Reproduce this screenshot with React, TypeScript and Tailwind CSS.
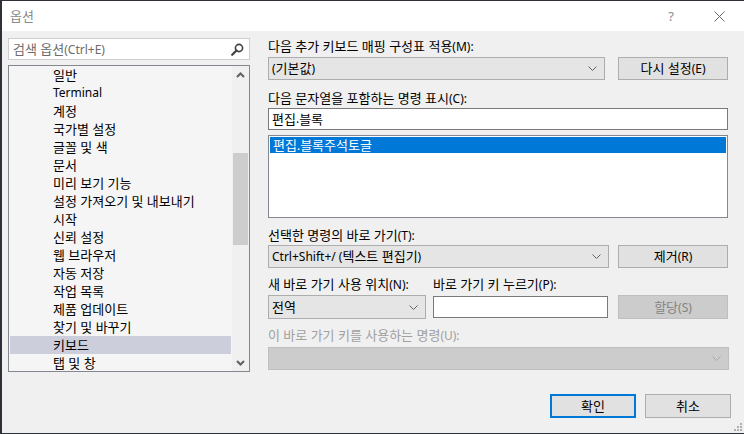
import React from 'react'

const items = [
  '일반',
  'Terminal',
  '계정',
  '국가별 설정',
  '글꼴 및 색',
  '문서',
  '미리 보기 기능',
  '설정 가져오기 및 내보내기',
  '시작',
  '신뢰 설정',
  '웹 브라우저',
  '자동 저장',
  '작업 목록',
  '제품 업데이트',
  '찾기 및 바꾸기',
  '키보드',
  '탭 및 창',
]

// Hangul runs are set a touch larger so their width matches the original UI font
const T = ({ s }: { s: string }) => {
  const parts = s.split(/([\uAC00-\uD7A3]+(?:\s+[\uAC00-\uD7A3]+)*)/).filter(Boolean)
  return (
    <>
      {parts.map((p, i) =>
        /[\uAC00-\uD7A3]/.test(p) ? (
          <span key={i} className="text-[13px]">{p}</span>
        ) : (
          <span key={i} className="text-[12px]">{p}</span>
        )
      )}
    </>
  )
}

const Chevron = ({ color = '#606060' }: { color?: string }) => (
  <svg width="9" height="5" viewBox="0 0 9 5">
    <polyline points="0.5,0.5 4.5,4.5 8.5,0.5" fill="none" stroke={color} strokeWidth="1" />
  </svg>
)

const Combo = ({ text, className }: { text: string; className: string }) => (
  <div className={`flex items-center justify-between border border-[#adadad] bg-[#e5e5e5] pl-[3px] pr-[7px] ${className}`}>
    <span><T s={text} /></span>
    <Chevron />
  </div>
)

const Button = ({ text, className }: { text: string; className: string }) => (
  <div className={`flex items-center justify-center border ${className}`}>
    <span><T s={text} /></span>
  </div>
)

const Label = ({ text, className = '' }: { text: string; className?: string }) => (
  <div className={`h-[16px] shrink-0 overflow-visible whitespace-nowrap ${className}`}>
    <T s={text} />
  </div>
)

const App: React.FC = () => {
  return (
    <div className="flex h-[434px] w-[744px] flex-col overflow-hidden border-t border-b border-l-2 border-[#2e3238] bg-[#f0f0f0] text-[12px] leading-[16px] text-black font-['Noto_Sans','Noto_Sans_CJK_KR',sans-serif]">
      {/* title bar */}
      <div className="flex h-[30px] shrink-0 items-center bg-white">
        <span className="ml-[8px] text-[#8a8a8a]"><T s="옵션" /></span>
        <span className="ml-auto mr-[40px] text-[13px] text-[#8a8a8a]">?</span>
        <svg width="11" height="11" viewBox="0 0 11 11" className="mr-[19px]">
          <path d="M0.5 0.5 L10.5 10.5 M10.5 0.5 L0.5 10.5" stroke="#6a6a6a" strokeWidth="1" />
        </svg>
      </div>

      <div className="flex flex-1 flex-col">
        <div className="flex h-[341px] shrink-0 pt-[7px]">
          {/* left column */}
          <div className="ml-[6px] flex w-[242px] flex-col">
            <div className="flex h-[22px] shrink-0 items-center justify-between border border-[#cdcdd2] bg-white pl-[4px] pr-[5px]">
              <span className="text-[#6d6d6d]"><T s="검색 옵션(Ctrl+E)" /></span>
              <svg width="13" height="13" viewBox="0 0 13 13">
                <circle cx="8" cy="5" r="3.6" fill="none" stroke="#404040" strokeWidth="1.6" />
                <path d="M5.5 7.5 L1.2 11.8" stroke="#404040" strokeWidth="2.2" strokeLinecap="round" />
              </svg>
            </div>
            <div className="mt-[5px] flex h-[307px] shrink-0 border border-[#828790] bg-[#f5f5f5]">
              <div className="flex flex-1 flex-col px-[1px]">
                {items.map((item) => (
                  <div
                    key={item}
                    className={`h-[18px] shrink-0 pl-[43px] leading-[18px] ${item === '키보드' ? 'bg-[#cccedb]' : ''}`}
                  >
                    <T s={item} />
                  </div>
                ))}
              </div>
              <div className="flex w-[17px] flex-col items-center bg-[#f0f0f0]">
                <div className="flex h-[17px] w-full items-center justify-center">
                  <svg width="9" height="6" viewBox="0 0 9 6">
                    <polyline points="1,5 4.5,1.5 8,5" fill="none" stroke="#606060" strokeWidth="2" />
                  </svg>
                </div>
                <div className="mt-[70px] h-[92px] w-[15px] bg-[#cdcdcd]" />
                <div className="mt-auto flex h-[17px] w-full items-center justify-center">
                  <svg width="9" height="6" viewBox="0 0 9 6">
                    <polyline points="1,1 4.5,4.5 8,1" fill="none" stroke="#606060" strokeWidth="2" />
                  </svg>
                </div>
              </div>
            </div>
          </div>

          {/* right column */}
          <div className="ml-[18px] flex w-[461px] flex-col">
            <Label text="다음 추가 키보드 매핑 구성표 적용(M):" />
            <div className="mt-[3px] flex">
              <Combo text="(기본값)" className="h-[23px] w-[337px]" />
              <Button text="다시 설정(E)" className="ml-[13px] h-[23px] w-[110px] border-[#adadad] bg-[#e1e1e1]" />
            </div>

            <Label text="다음 문자열을 포함하는 명령 표시(C):" className="mt-[10px]" />
            <div className="mt-[2px] flex h-[22px] w-[460px] shrink-0 items-center border border-[#7a7a7a] bg-white pl-[3px]">
              <T s="편집.블록" />
            </div>
            <div className="mt-[5px] h-[83px] w-[460px] shrink-0 border border-[#828790] bg-white p-[1px]">
              <div className="h-[16px] overflow-hidden bg-[#0078d7] pl-[3px] leading-[16px] text-white"><T s="편집.블록주석토글" /></div>
            </div>

            <Label text="선택한 명령의 바로 가기(T):" className="mt-[9px]" />
            <div className="mt-[2px] flex">
              <Combo text="Ctrl+Shift+/ (텍스트 편집기)" className="h-[23px] w-[341px]" />
              <Button text="제거(R)" className="ml-[9px] h-[23px] w-[110px] border-[#adadad] bg-[#e1e1e1]" />
            </div>

            <div className="mt-[8px] flex h-[16px]">
              <Label text="새 바로 가기 사용 위치(N):" className="w-[165px]" />
              <Label text="바로 가기 키 누르기(P):" />
            </div>
            <div className="mt-[3px] flex">
              <Combo text="전역" className="h-[24px] w-[158px]" />
              <div className="ml-[7px] mt-[1px] h-[22px] w-[175px] border border-[#7a7a7a] bg-white" />
              <Button text="할당(S)" className="ml-[10px] h-[24px] w-[110px] border-[#bfbfbf] bg-[#cccccc] text-[#838383]" />
            </div>

            <Label text="이 바로 가기 키를 사용하는 명령(U):" className="mt-[8px] text-[#a0a0a0]" />
            <div className="mt-[4px] flex h-[23px] w-[461px] shrink-0 items-center justify-end border border-[#bfbfbf] bg-[#cccccc] pr-[7px]">
              <Chevron color="#a8a8a8" />
            </div>
          </div>
        </div>

        {/* bottom buttons */}
        <div className="mt-[22px] flex justify-end pr-[13px]">
          <Button text="확인" className="h-[24px] w-[86px] border-2 border-[#0078d7] bg-[#e1e1e1]" />
          <Button text="취소" className="ml-[9px] h-[24px] w-[86px] border-[#adadad] bg-[#e1e1e1]" />
        </div>
        <div className="mt-auto mb-[2px] mr-[2px] flex justify-end">
          <svg width="8" height="8" viewBox="0 0 8 8">
            <rect x="6" y="0" width="2" height="2" fill="#b0b0b0" />
            <rect x="3" y="3" width="2" height="2" fill="#b0b0b0" />
            <rect x="6" y="3" width="2" height="2" fill="#b0b0b0" />
            <rect x="0" y="6" width="2" height="2" fill="#b0b0b0" />
            <rect x="3" y="6" width="2" height="2" fill="#b0b0b0" />
            <rect x="6" y="6" width="2" height="2" fill="#b0b0b0" />
          </svg>
        </div>
      </div>
    </div>
  )
}

export default App
